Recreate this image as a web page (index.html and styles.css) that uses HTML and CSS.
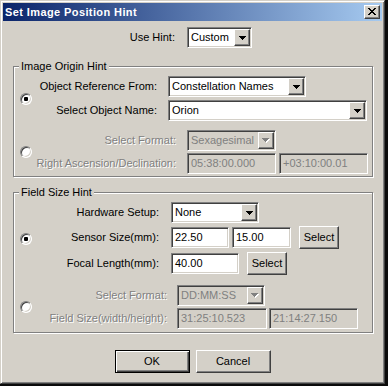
FILE: index.html
```html
<!DOCTYPE html>
<html>
<head>
<meta charset="utf-8">
<link rel="stylesheet" href="styles.css">
</head>
<body>
<div class="window">
  <div class="titlebar">
    <span class="title">Set Image Position Hint</span>
    <div class="close raised">
      <svg width="8" height="7" viewBox="0 0 8 7"><g fill="#000">
        <rect x="0" y="0" width="2" height="1"/><rect x="6" y="0" width="2" height="1"/>
        <rect x="1" y="1" width="2" height="1"/><rect x="5" y="1" width="2" height="1"/>
        <rect x="2" y="2" width="4" height="1"/>
        <rect x="3" y="3" width="2" height="1"/>
        <rect x="2" y="4" width="4" height="1"/>
        <rect x="1" y="5" width="2" height="1"/><rect x="5" y="5" width="2" height="1"/>
        <rect x="0" y="6" width="2" height="1"/><rect x="6" y="6" width="2" height="1"/>
      </g></svg>
    </div>
  </div>
  <div class="content">
    <div class="row hint-row">
      <span class="lbl lbl-hint">Use Hint:</span>
      <div class="combo w-hint"><span class="val">Custom</span><span class="arrow raised"><svg width="7" height="4" viewBox="0 0 7 4"><path d="M0 0h7v1h-1v1h-1v1h-1v1h-1v-1h-1v-1h-1v-1h-1z"/></svg></span></div>
    </div>

    <fieldset class="group g1">
      <legend>Image Origin Hint</legend>
      <div class="section s1a">
        <div class="radio-col"><span class="radio checked"></span></div>
        <div class="rows gap3">
          <div class="row">
            <span class="lbl l1a">Object Reference From:</span>
            <div class="combo w-ref"><span class="val">Constellation Names</span><span class="arrow raised"><svg width="7" height="4" viewBox="0 0 7 4"><path d="M0 0h7v1h-1v1h-1v1h-1v1h-1v-1h-1v-1h-1v-1h-1z"/></svg></span></div>
          </div>
          <div class="row">
            <span class="lbl l1a">Select Object Name:</span>
            <div class="combo w-name"><span class="val">Orion</span><span class="arrow raised"><svg width="7" height="4" viewBox="0 0 7 4"><path d="M0 0h7v1h-1v1h-1v1h-1v1h-1v-1h-1v-1h-1v-1h-1z"/></svg></span></div>
          </div>
        </div>
      </div>
      <div class="section s1b">
        <div class="radio-col"><span class="radio"></span></div>
        <div class="rows gap2">
          <div class="row">
            <span class="lbl l1b disabled">Select Format:</span>
            <div class="combo off w89"><span class="val">Sexagesimal</span><span class="arrow raised"><svg width="8" height="5" viewBox="0 0 8 5"><path fill="#fff" d="M1 1h7v1h-1v1h-1v1h-1v1h-1v-1h-1v-1h-1v-1h-1z"/><path fill="#808080" d="M0 0h7v1h-1v1h-1v1h-1v1h-1v-1h-1v-1h-1v-1h-1z"/></svg></span></div>
          </div>
          <div class="row">
            <span class="lbl l1b disabled">Right Ascension/Declination:</span>
            <div class="edit off w89">05:38:00.000</div>
            <div class="edit off w89 ml3">+03:10:00.01</div>
          </div>
        </div>
      </div>
    </fieldset>

    <fieldset class="group g2">
      <legend>Field Size Hint</legend>
      <div class="section s2a">
        <div class="radio-col"><span class="radio checked"></span></div>
        <div class="rows gap3">
          <div class="row">
            <span class="lbl l2a">Hardware Setup:</span>
            <div class="combo w88"><span class="val">None</span><span class="arrow raised"><svg width="7" height="4" viewBox="0 0 7 4"><path d="M0 0h7v1h-1v1h-1v1h-1v1h-1v-1h-1v-1h-1v-1h-1z"/></svg></span></div>
          </div>
          <div class="row tall">
            <span class="lbl l2a">Sensor Size(mm):</span>
            <div class="edit w58">22.50</div>
            <div class="edit w59 ml3">15.00</div>
            <div class="btn ml8">Select</div>
          </div>
          <div class="row tall">
            <span class="lbl l2a">Focal Length(mm):</span>
            <div class="edit w68">40.00</div>
            <div class="btn ml8">Select</div>
          </div>
        </div>
      </div>
      <div class="section s2b">
        <div class="radio-col"><span class="radio"></span></div>
        <div class="rows gap2">
          <div class="row">
            <span class="lbl l2b disabled">Select Format:</span>
            <div class="combo off w88"><span class="val">DD:MM:SS</span><span class="arrow raised"><svg width="8" height="5" viewBox="0 0 8 5"><path fill="#fff" d="M1 1h7v1h-1v1h-1v1h-1v1h-1v-1h-1v-1h-1v-1h-1z"/><path fill="#808080" d="M0 0h7v1h-1v1h-1v1h-1v1h-1v-1h-1v-1h-1v-1h-1z"/></svg></span></div>
          </div>
          <div class="row">
            <span class="lbl l2b disabled">Field Size(width/height):</span>
            <div class="edit off w90">31:25:10.523</div>
            <div class="edit off w89 ml2">21:14:27.150</div>
          </div>
        </div>
      </div>
    </fieldset>

    <div class="buttons">
      <div class="btn dlg default">OK</div>
      <div class="btn dlg">Cancel</div>
    </div>
  </div>
</div>
</body>
</html>
```
FILE: styles.css
```css
* { box-sizing: border-box; }
html, body { margin: 0; padding: 0; }
body {
  background: #0b0b0b;
  width: 388px;
  height: 386px;
  overflow: hidden;
  font-family: "Liberation Sans", Arial, sans-serif;
  font-size: 11px;
  color: #000;
}
.window {
  width: 385px;
  height: 384px;
  background: #d4d0c8;
  border: 1px solid;
  border-color: #d4d0c8 #404040 #404040 #d4d0c8;
  box-shadow: inset 1px 1px 0 #fff, inset -1px -1px 0 #808080;
  padding: 2px;
  display: flex;
  flex-direction: column;
}
.titlebar {
  height: 18px;
  flex: none;
  background: linear-gradient(to right, #0a246a, #a6caf0);
  display: flex;
  align-items: center;
  justify-content: space-between;
  padding: 0 2px 0 2px;
}
.title {
  color: #fff;
  font-weight: bold;
  font-size: 11px;
  letter-spacing: 0.4px;
  line-height: 18px;
}
.raised {
  background: #d4d0c8;
  border: 1px solid;
  border-color: #fff #404040 #404040 #fff;
  box-shadow: inset -1px -1px 0 #808080;
}
.close {
  width: 16px;
  height: 14px;
  display: flex;
  align-items: center;
  justify-content: center;
  padding-right: 1px;
  padding-bottom: 1px;
}
.close svg { display: block; }
.content {
  flex: 1;
  padding-top: 6px;
  display: flex;
  flex-direction: column;
}
.row {
  display: flex;
  align-items: center;
  height: 21px;
}
.row.tall { height: 23px; }
.lbl {
  flex: none;
  text-align: right;
  white-space: nowrap;
  line-height: 13px;
}
.lbl-hint { width: 172px; margin-right: 12px; }
.l1a { width: 123px; margin-right: 11px; }
.l1b { width: 142px; margin-right: 11px; }
.l2a { width: 125px; margin-right: 12px; }
.l2b { width: 133px; margin-right: 10px; }
.disabled { color: #808080; text-shadow: 1px 1px 0 #fff; }

.combo, .edit {
  flex: none;
  height: 21px;
  background: #fff;
  border: 1px solid;
  border-color: #808080 #fff #fff #808080;
  box-shadow: inset 1px 1px 0 #404040, inset -1px -1px 0 #d4d0c8;
  white-space: nowrap;
  overflow: hidden;
}
.combo {
  display: flex;
  align-items: stretch;
  padding: 1px;
}
.combo .val {
  flex: 1;
  padding-left: 2px;
  line-height: 17px;
  overflow: hidden;
}
.combo .arrow {
  width: 16px;
  flex: none;
  display: flex;
  align-items: center;
  justify-content: center;
}
.combo .arrow svg { display: block; }
.combo.off, .edit.off { background: #d4d0c8; color: #808080; }
.edit {
  padding: 0 3px;
  line-height: 19px;
}
.w-hint { width: 65px; }
.w-ref { width: 138px; }
.w-name { width: 199px; }
.w88 { width: 88px; }
.w89 { width: 89px; }
.w90 { width: 90px; }
.w58 { width: 58px; }
.w59 { width: 59px; }
.w68 { width: 68px; }
.ml2 { margin-left: 2px; }
.ml3 { margin-left: 3px; }
.ml8 { margin-left: 8px; }

.group {
  margin: 0 0 0 10px;
  width: 360px;
  min-inline-size: 0;
  border: 1px solid #808080;
  box-shadow: 1px 1px 0 #fff, inset 1px 1px 0 #fff;
  padding: 0;
}
.g1 { margin-top: 12px; padding-bottom: 2px; }
.g2 { margin-top: 9px; padding-bottom: 3px; }
.group legend {
  margin-left: 5px;
  padding: 0 2px;
  height: 13px;
  line-height: 13px;
  background: #d4d0c8;
  font-size: 11px;
}
.section { display: flex; }
.s1a { margin-top: 3px; }
.s1b { margin-top: 9px; }
.s2a { margin-top: 3px; }
.s2b { margin-top: 10px; }
.radio-col {
  width: 20px;
  flex: none;
  padding-left: 6px;
  display: flex;
  align-items: center;
}
.rows { display: flex; flex-direction: column; }
.gap3 { gap: 3px; }
.gap2 { gap: 2px; }
.radio {
  width: 12px;
  height: 12px;
  border-radius: 50%;
  border: 1px solid;
  border-color: #808080 #fff #fff #808080;
  box-shadow: inset 1px 1px 0 #404040, inset -1px -1px 0 #d4d0c8;
  background: #fff;
  display: flex;
  align-items: center;
  justify-content: center;
}
.radio.checked::after {
  content: "";
  width: 4px;
  height: 4px;
  border-radius: 1px;
  background: #000;
}
.btn {
  flex: none;
  width: 40px;
  height: 23px;
  background: #d4d0c8;
  border: 1px solid;
  border-color: #fff #404040 #404040 #fff;
  box-shadow: inset -1px -1px 0 #808080;
  display: flex;
  align-items: center;
  justify-content: center;
  line-height: 13px;
}
.buttons {
  margin-top: 17px;
  display: flex;
  justify-content: center;
  gap: 6px;
}
.btn.dlg { width: 75px; }
.btn.default {
  border: 1px solid #000;
  box-shadow: inset 1px 1px 0 #fff, inset -1px -1px 0 #404040, inset -2px -2px 0 #808080;
}
```
